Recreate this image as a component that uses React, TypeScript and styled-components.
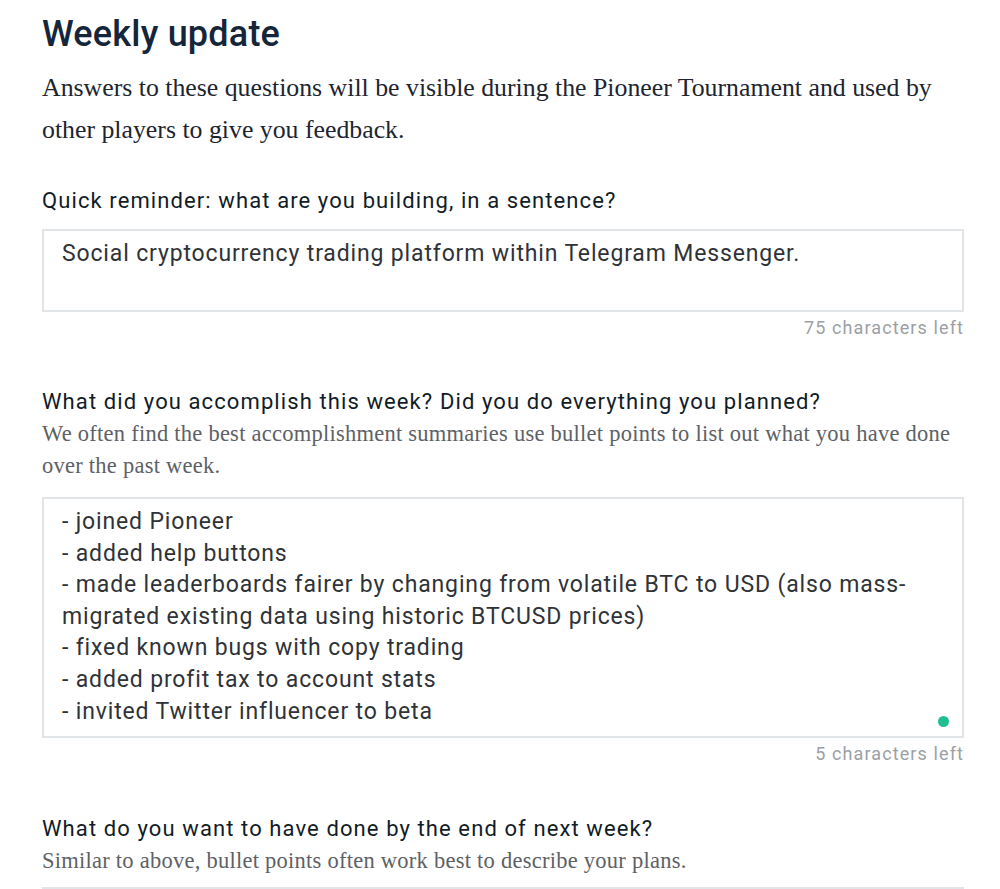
import React from "react";
import styled, {createGlobalStyle} from "styled-components";

const GlobalStyle = createGlobalStyle`
  html, body {
    margin: 0;
    padding: 0;
    background: #ffffff;
  }
`

const sans = `Roboto, "Liberation Sans", sans-serif`
const serif = `"Liberation Serif", "DejaVu Serif", serif`

const Page = styled.div`
  width: 922px;
  padding-top: 12px;
  margin-left: 42px;
  overflow: hidden;
  height: 889px;
  box-sizing: border-box;
`

const Title = styled.h1`
  margin: 0;
  font-family: ${sans};
  font-weight: 500;
  font-size: 36px;
  line-height: 44px;
  letter-spacing: 0.2px;
  color: #15263a;
`

const Intro = styled.p`
  margin: 11px 0 0;
  font-family: ${serif};
  font-size: 25.8px;
  line-height: 42px;
  color: #1d2530;
`

const Question = styled.section<{ top: number }>`
  display: flex;
  flex-direction: column;
  margin-top: ${p => p.top}px;
`

const Label = styled.h3`
  margin: 0;
  font-family: ${sans};
  font-weight: 400;
  font-size: 22px;
  line-height: 32px;
  letter-spacing: 1.1px;
  color: #111c27;
`

const Hint = styled.p`
  margin: 0;
  font-family: ${serif};
  font-size: 22.5px;
  line-height: 32px;
  letter-spacing: 0.25px;
  color: #5d6166;
`

const BoxWrap = styled.div<{ gap: number }>`
  position: relative;
  margin-top: ${p => p.gap}px;
`

const Box = styled.textarea<{ h: number }>`
  display: block;
  width: 100%;
  height: ${p => p.h}px;
  box-sizing: border-box;
  border: 2px solid #e2e5e8;
  border-radius: 0;
  padding: 7px 18px 8px;
  margin: 0;
  resize: none;
  outline: none;
  overflow: hidden;
  font-family: ${sans};
  font-size: 23px;
  line-height: 31.6px;
  color: #2f3338;
  letter-spacing: 0.85px;
  background: #fff;
`

const Dot = styled.span`
  position: absolute;
  right: 15px;
  bottom: 11px;
  width: 11px;
  height: 11px;
  border-radius: 50%;
  background: #1fbf91;
`

const Counter = styled.div`
  margin-top: 5px;
  text-align: right;
  font-family: ${sans};
  font-size: 18px;
  line-height: 22px;
  letter-spacing: 1.1px;
  color: #9ca0a4;
`

const accomplished = `- joined Pioneer
- added help buttons
- made leaderboards fairer by changing from volatile BTC to USD (also mass-migrated existing data using historic BTCUSD prices)
- fixed known bugs with copy trading
- added profit tax to account stats
- invited Twitter influencer to beta`

export default function App() {
    return (
        <Page>
            <GlobalStyle/>
            <Title>Weekly update</Title>
            <Intro>
                Answers to these questions will be visible during the Pioneer Tournament and used by other players to
                give you feedback.
            </Intro>

            <Question top={34}>
                <Label>Quick reminder: what are you building, in a sentence?</Label>
                <BoxWrap gap={12}>
                    <Box h={83} readOnly
                         defaultValue="Social cryptocurrency trading platform within Telegram Messenger."/>
                </BoxWrap>
                <Counter>75 characters left</Counter>
            </Question>

            <Question top={47}>
                <Label>What did you accomplish this week? Did you do everything you planned?</Label>
                <Hint>We often find the best accomplishment summaries use bullet points to list out what you have done over
                    the past week.</Hint>
                <BoxWrap gap={15}>
                    <Box h={241} readOnly defaultValue={accomplished}/>
                    <Dot/>
                </BoxWrap>
                <Counter>5 characters left</Counter>
            </Question>

            <Question top={48}>
                <Label>What do you want to have done by the end of next week?</Label>
                <Hint>Similar to above, bullet points often work best to describe your plans.</Hint>
                <BoxWrap gap={10}>
                    <Box h={200} readOnly defaultValue=""/>
                </BoxWrap>
            </Question>
        </Page>
    )
}
